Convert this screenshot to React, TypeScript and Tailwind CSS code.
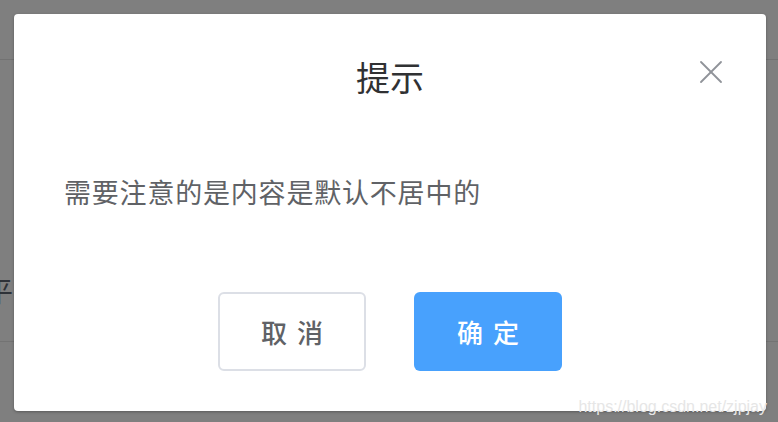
import { X } from 'lucide-react';

// Confirm dialog over a dimmed page: title, close icon, plain body text and two centred buttons.

const cjk = { fontFamily: '"Noto Sans CJK SC", "Noto Sans", sans-serif' };

export default function App() {
	return (
		<div className="relative h-[422px] w-[778px] overflow-hidden bg-[#7f7f7f]" style={cjk}>
			{/* dimmed page underneath */}
			<div className="flex h-full flex-col">
				<div className="h-[60px] border-b border-[#727272]" />
				<div className="flex h-[282px] items-start border-b border-[#737373] pt-[216px]">
					<span className="-ml-[15px] text-[28px] leading-none text-[#2e3238]">平</span>
				</div>
			</div>

			{/* dialog */}
			<div className="absolute left-[14px] top-[14px] flex h-[397px] w-[752px] flex-col rounded-[4px] bg-white shadow-[0_1px_3px_rgba(0,0,0,0.3)]">
				<div className="relative flex h-[125px] items-center justify-center">
					<h2 className="text-[34px] leading-none text-[#303133]">提示</h2>
					<button className="absolute right-[35px] top-[38px] text-[#909399]">
						<X className="h-[40px] w-[40px]" strokeWidth={1.1} />
					</button>
				</div>
				<div className="px-[50px] pt-[33px]">
					<p className="text-[27px] leading-[40px] tracking-[0.8px] text-[#606266]">需要注意的是内容是默认不居中的</p>
				</div>
				<div className="mt-auto flex justify-center gap-[48px] pb-[40px]">
					<button className="flex h-[79px] w-[148px] items-center justify-center rounded-[6px] border-2 border-[#dcdfe6] bg-white pl-[10px] text-[26px] font-medium tracking-[10px] text-[#606266]">
						取消
					</button>
					<button className="flex h-[79px] w-[148px] items-center justify-center rounded-[6px] bg-[#48a1fd] pl-[10px] text-[26px] font-medium tracking-[10px] text-white">
						确定
					</button>
				</div>
			</div>

			<span
				className="absolute right-[11px] top-[395px] text-[16px] text-[#e6e6e6]"
				style={{ fontFamily: '"Liberation Sans", Arial, sans-serif' }}
			>
				https://blog.csdn.net/zjpjay
			</span>
		</div>
	);
}
